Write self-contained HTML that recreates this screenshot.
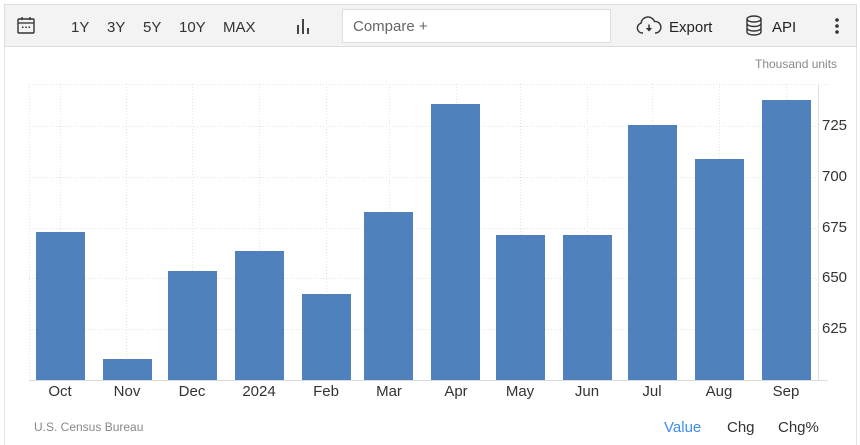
<!DOCTYPE html>
<html><head><meta charset="utf-8"><style>
*{margin:0;padding:0;box-sizing:border-box}
body{width:860px;height:445px;background:#fff;font-family:"Liberation Sans",Arial,sans-serif;position:relative;overflow:hidden}
.frame{position:absolute;left:4px;top:4px;width:853px;height:441px;border-left:1px solid #e6e6e6;border-right:1px solid #e6e6e6}
.tb{position:absolute;left:4px;top:4px;width:853px;height:43px;background:#f3f3f3;border:1px solid #dcdcdc}
.t{position:absolute;font-size:15px;color:#333;top:19px}
.cmp{position:absolute;left:342px;top:9px;width:269px;height:34px;background:#fff;border:1px solid #dedede;font-size:15px;color:#666;padding:8px 10px}
.a{position:absolute;font-size:15px;color:#222}
</style></head><body>
<div class="frame"></div>
<div class="tb"></div>
<svg style="position:absolute;left:17px;top:16px" width="19" height="19" viewBox="0 0 19 19"><rect x="1" y="3" width="16" height="14" rx="1" fill="none" stroke="#333" stroke-width="1.4"/><line x1="1" y1="7" x2="17" y2="7" stroke="#333" stroke-width="1.3"/><line x1="5" y1="1" x2="5" y2="4" stroke="#333" stroke-width="1.4"/><line x1="13" y1="1" x2="13" y2="4" stroke="#333" stroke-width="1.4"/><rect x="5" y="10.5" width="1.5" height="1.5" fill="#333"/><rect x="8.3" y="10.5" width="1.5" height="1.5" fill="#333"/><rect x="11.6" y="10.5" width="1.5" height="1.5" fill="#333"/></svg>
<div class="t" style="left:71px">1Y</div>
<div class="t" style="left:107px">3Y</div>
<div class="t" style="left:143px">5Y</div>
<div class="t" style="left:179px">10Y</div>
<div class="t" style="left:223px">MAX</div>
<svg style="position:absolute;left:296px;top:18px" width="16" height="16"><rect x="1" y="7" width="2" height="9" fill="#444"/><rect x="6" y="1" width="2" height="15" fill="#444"/><rect x="11" y="10" width="2" height="6" fill="#444"/></svg>
<div class="cmp">Compare +</div>
<svg style="position:absolute;left:636px;top:16px" width="26" height="20" viewBox="0 0 26 20"><path d="M7 17H6a5 5 0 0 1-1-9.8A7 7 0 0 1 18.5 5.5 5.8 5.8 0 0 1 20 17H19" fill="none" stroke="#333" stroke-width="1.4"/><line x1="13" y1="8.5" x2="13" y2="14" stroke="#333" stroke-width="1.5"/><path d="M10.5 12L13 14.8 15.5 12" fill="#333" stroke="#333" stroke-width="1"/></svg>
<div class="a" style="left:669px;top:19px">Export</div>
<svg style="position:absolute;left:745px;top:15px" width="18" height="21" viewBox="0 0 18 21"><ellipse cx="9" cy="4" rx="7" ry="3" fill="none" stroke="#333" stroke-width="1.4"/><path d="M2 4v13c0 1.7 3.1 3 7 3s7-1.3 7-3V4M2 8.5c0 1.7 3.1 3 7 3s7-1.3 7-3M2 13c0 1.7 3.1 3 7 3s7-1.3 7-3" fill="none" stroke="#333" stroke-width="1.4"/></svg>
<div class="a" style="left:772px;top:19px">API</div>
<svg style="position:absolute;left:834px;top:17px" width="6" height="18"><circle cx="3" cy="3" r="1.8" fill="#333"/><circle cx="3" cy="9" r="1.8" fill="#333"/><circle cx="3" cy="15" r="1.8" fill="#333"/></svg>
<div style="position:absolute;left:755px;top:57px;font-size:12px;color:#888">Thousand units</div>
<svg style="position:absolute;left:0;top:0" width="860" height="445">
<g stroke="#e2e2e2" stroke-dasharray="1,2" stroke-width="1">
<line x1="29" y1="84.5" x2="828" y2="84.5"/>
<line x1="29" y1="126.5" x2="818" y2="126.5"/>
<line x1="29" y1="177.5" x2="818" y2="177.5"/>
<line x1="29" y1="228.5" x2="818" y2="228.5"/>
<line x1="29" y1="278.5" x2="818" y2="278.5"/>
<line x1="29" y1="329.5" x2="818" y2="329.5"/>
<line x1="29.5" y1="84" x2="29.5" y2="380"/>
<line x1="60.5" y1="84" x2="60.5" y2="380"/><line x1="126.5" y1="84" x2="126.5" y2="380"/><line x1="192.5" y1="84" x2="192.5" y2="380"/><line x1="259.5" y1="84" x2="259.5" y2="380"/><line x1="326.5" y1="84" x2="326.5" y2="380"/><line x1="389.5" y1="84" x2="389.5" y2="380"/><line x1="456.5" y1="84" x2="456.5" y2="380"/><line x1="520.5" y1="84" x2="520.5" y2="380"/><line x1="587.5" y1="84" x2="587.5" y2="380"/><line x1="652.5" y1="84" x2="652.5" y2="380"/><line x1="719.5" y1="84" x2="719.5" y2="380"/><line x1="786.5" y1="84" x2="786.5" y2="380"/>
</g>
<line x1="818.5" y1="84" x2="818.5" y2="381" stroke="#e0e0e0"/>
<line x1="29" y1="380.5" x2="828" y2="380.5" stroke="#dcdcdc"/>
<g fill="#4f81bd">
<rect x="36" y="232" width="49" height="148"/><rect x="103" y="359" width="49" height="21"/><rect x="168" y="271" width="49" height="109"/><rect x="235" y="251" width="49" height="129"/><rect x="302" y="294" width="49" height="86"/><rect x="364" y="212" width="49" height="168"/><rect x="431" y="104" width="49" height="276"/><rect x="496" y="235" width="49" height="145"/><rect x="563" y="235" width="49" height="145"/><rect x="628" y="125" width="49" height="255"/><rect x="695" y="159" width="49" height="221"/><rect x="762" y="100" width="49" height="280"/>
</g>
<g font-family="Liberation Sans,Arial,sans-serif" font-size="15" fill="#333">
<text x="822" y="130">725</text><text x="822" y="181">700</text><text x="822" y="232">675</text><text x="822" y="282">650</text><text x="822" y="333">625</text>
</g>
<g font-family="Liberation Sans,Arial,sans-serif" font-size="15" fill="#333" text-anchor="middle">
<text x="60" y="396">Oct</text><text x="127" y="396">Nov</text><text x="192" y="396">Dec</text><text x="259" y="396">2024</text><text x="326" y="396">Feb</text><text x="389" y="396">Mar</text><text x="456" y="396">Apr</text><text x="520" y="396">May</text><text x="587" y="396">Jun</text><text x="652" y="396">Jul</text><text x="719" y="396">Aug</text><text x="786" y="396">Sep</text>
</g>
<text x="34" y="431" font-family="Liberation Sans,Arial,sans-serif" font-size="12" fill="#888">U.S. Census Bureau</text>
<g font-family="Liberation Sans,Arial,sans-serif" font-size="15">
<text x="664" y="432" fill="#3c8df0">Value</text><text x="727" y="432" fill="#333">Chg</text><text x="778" y="432" fill="#333">Chg%</text>
</g>
</svg>
</body></html>
